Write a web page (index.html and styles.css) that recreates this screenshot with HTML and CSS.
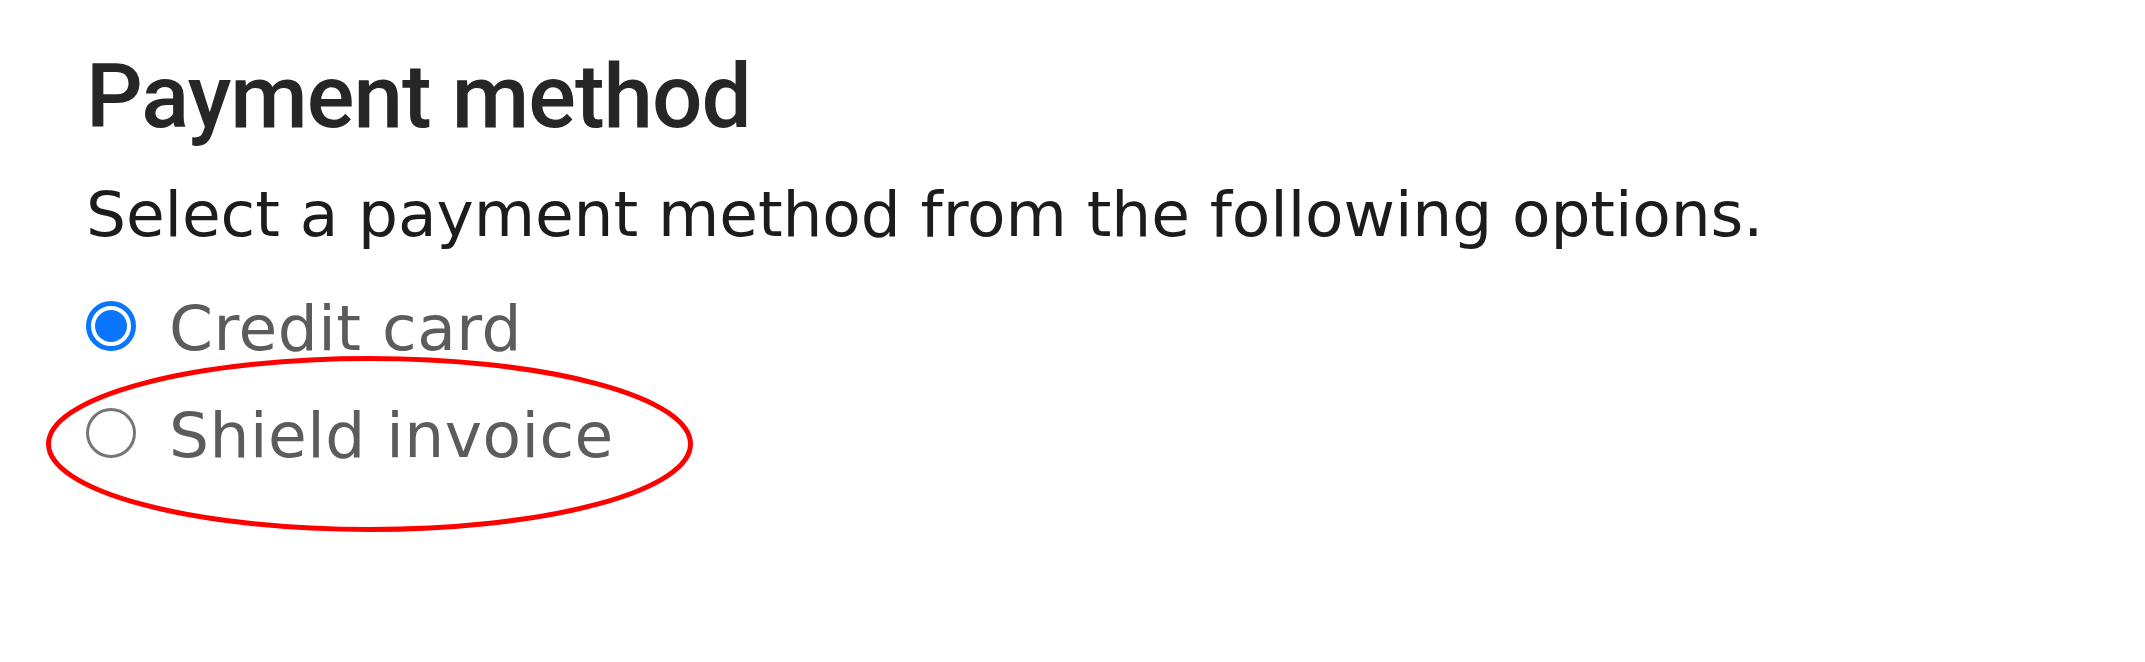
FILE: index.html
```html
<!DOCTYPE html>
<html lang="en">
<head>
<meta charset="utf-8">
<title>Payment method</title>
<link rel="stylesheet" href="styles.css">
</head>
<body>
<main class="panel">
  <h1 class="title">Payment method</h1>
  <p class="subtitle">Select a payment method from the following options.</p>
  <div class="options">
    <label class="option">
      <span class="radio radio-checked"><span class="dot"></span></span>
      <span class="label">Credit card</span>
    </label>
    <label class="option">
      <span class="radio"></span>
      <span class="label">Shield invoice</span>
    </label>
  </div>
  <svg class="highlight" width="660" height="190" viewBox="0 0 660 190" aria-hidden="true">
    <ellipse cx="329.5" cy="94" rx="321" ry="85.5" fill="none" stroke="#ff0000" stroke-width="5"/>
  </svg>
</main>
</body>
</html>
```
FILE: styles.css
```css
html, body {
  margin: 0;
  padding: 0;
  background: #ffffff;
}

.panel {
  position: relative;
  box-sizing: border-box;
  min-height: 662px;
  padding: 44px 0 0 86px;
  font-family: "Roboto", "Liberation Sans", sans-serif;
}

.title {
  margin: 0;
  font-size: 89px;
  line-height: 106px;
  font-weight: 500;
  letter-spacing: -1px;
  color: #262626;
}

.subtitle {
  margin: 28px 0 0 0;
  font-family: "DejaVu Sans", "Inter", sans-serif;
  font-size: 63px;
  line-height: 74px;
  font-weight: 400;
  letter-spacing: -0.1px;
  color: #1c1c1c;
}

.options {
  display: flex;
  flex-direction: column;
  gap: 33px;
  margin-top: 40px;
}

.option {
  display: flex;
  align-items: center;
  gap: 33px;
  font-family: "DejaVu Sans", "Inter", sans-serif;
  font-size: 63px;
  line-height: 74px;
  letter-spacing: 0.5px;
  color: #5c5c5c;
}

.radio {
  box-sizing: border-box;
  width: 50px;
  height: 50px;
  border-radius: 50%;
  border: 3px solid #767676;
  margin-bottom: 6px;
  display: flex;
  align-items: center;
  justify-content: center;
  flex: none;
}

.radio-checked {
  border: 5px solid #0a75ff;
}

.dot {
  width: 32px;
  height: 32px;
  border-radius: 50%;
  background: #0a75ff;
}

.highlight {
  position: absolute;
  left: 40px;
  top: 350px;
}
```
